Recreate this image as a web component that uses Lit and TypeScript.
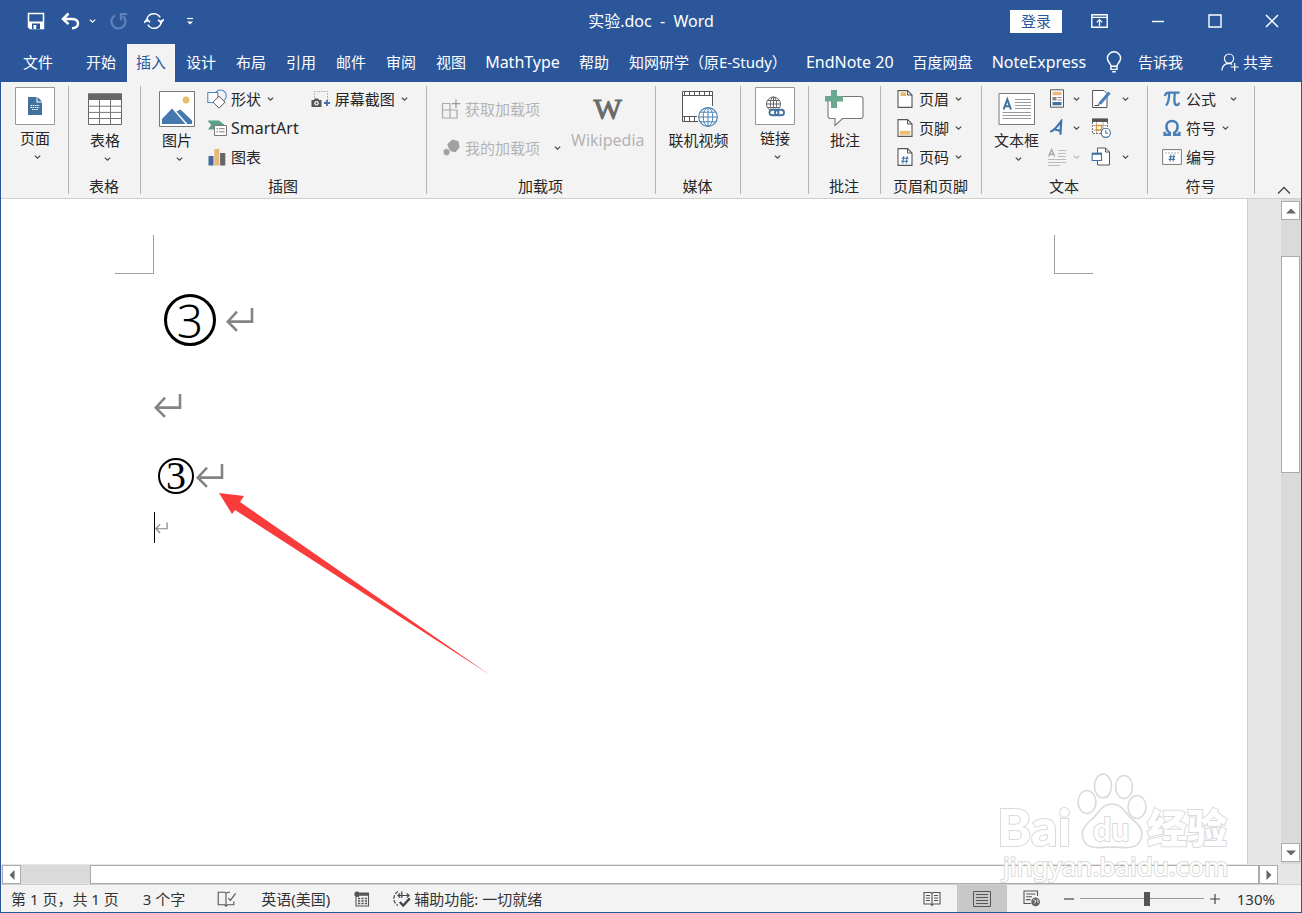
import { LitElement, html, css, svg, nothing } from "lit";
import type { TemplateResult } from "lit";
import { customElement, state } from "lit/decorators.js";
import { classMap } from "lit/directives/class-map.js";

const icon = (w: number, h: number, body: unknown) =>
  html`<svg class="ico" width=${w} height=${h} viewBox="0 0 ${w} ${h}" fill="none" aria-hidden="true">${body}</svg>`;

const chevron = (cls = "") =>
  html`<svg class="chev ${cls}" width="7" height="8" viewBox="0 0 7 8" fill="none" aria-hidden="true"><path d="M0.8 2.6 3.5 5.2 6.2 2.6" stroke="currentColor" stroke-width="1.2" /></svg>`;

const isLatin = (s: string) => /^[A-Za-z0-9 ]+$/.test(s);

const I = {
  save: icon(18, 18, svg`<path d="M1.5 1.5H16.5V16.5H3L1.5 15Z" stroke="#fff" stroke-width="1.5"/><path d="M2 9.5H16V16H2Z" fill="#fff"/><path d="M5 11.5H13V17H5Z" fill="#2b579a"/><path d="M6.5 13H9.2V17H6.5Z" fill="#fff"/>`),
  undo: icon(19, 18, svg`<path d="M7.5 1.5 2 7l5.5 5.2M2.5 7H10.5C15 7 17 9.2 17 11.6S15 16.3 11 16.3" stroke="#fff" stroke-width="2.5"/>`),
  redo: icon(18, 18, svg`<path d="M13 4.2A7 7 0 1 1 5 3.4" stroke="#6182b8" stroke-width="2.2"/><path d="M11 8.5V2H17" stroke="#6182b8" stroke-width="2.2"/>`),
  sync: icon(20, 18, svg`<path d="M2.8 10A7.2 7.2 0 0 1 16.2 5.4M17.2 8A7.2 7.2 0 0 1 3.8 12.6" stroke="#fff" stroke-width="1.6"/><path d="M0.2 10.8 2.9 7.4 6 10.2M19.8 7.2 17.1 10.6 14 7.8" stroke="#fff" stroke-width="1.6"/>`),
  more: icon(8, 9, svg`<path d="M1 1.5H7" stroke="#fff" stroke-width="1.2"/><path d="M1 4.4H7L4 7.6Z" fill="#fff"/>`),
  ribbonOpts: icon(17, 14, svg`<path d="M.8.8H16.2V13.2H.8ZM.8 3.4H16.2" stroke="#fff" stroke-width="1.4"/><path d="M8.5 12V6M5.8 8.4 8.5 5.6 11.2 8.4" stroke="#fff" stroke-width="1.3"/>`),
  min: icon(14, 14, svg`<path d="M1 7.5H13" stroke="#fff" stroke-width="1.4"/>`),
  max: icon(14, 14, svg`<path d="M1 1H13V13H1Z" stroke="#fff" stroke-width="1.4"/>`),
  close: icon(14, 14, svg`<path d="M1 1 13 13M13 1 1 13" stroke="#fff" stroke-width="1.5"/>`),
  bulb: icon(16, 22, svg`<path d="M5 15.2C5 12.6 1.4 11 1.4 7.2A6.6 6.4 0 0 1 14.6 7.2C14.6 11 11 12.6 11 15.2ZM5 15.2V18.4H11V15.2M6.2 20.8H9.8" stroke="#fff" stroke-width="1.4"/>`),
  share: icon(18, 18, svg`<circle cx="8" cy="5.6" r="4.6" stroke="#fff" stroke-width="1.2"/><path d="M.8 17.4C1.2 13.4 3.6 10.6 8 10.4 9.4 10.4 10.4 10.8 11.2 11.4M13.7 10V18M9.7 14H17.7" stroke="#fff" stroke-width="1.2"/>`),
  page: icon(40, 38, svg`<path d="M.5.5H39.5V37.5H.5Z" fill="#fff" stroke="#999"/><path d="M13 10H21.5V15.5H27V28H13Z" fill="#41719c"/><path d="M22.5 10 27 14.5H22.5Z" fill="#41719c"/><path d="M15.5 18.5H24.5M15.5 20.5H24.5M17 22.5H23" stroke="#fff" stroke-dasharray="1.5 .7"/>`),
  table: icon(36, 34, svg`<path d="M1.5 2H34.5V32.5H1.5Z" fill="#fff" stroke="#666"/><path d="M1 1.5H35V8H1Z" fill="#666"/><path d="M1.5 14.2H34.5M1.5 20.4H34.5M1.5 26.5H34.5M12.5 8V32M23.5 8V32" stroke="#777"/>`),
  picture: icon(36, 36, svg`<path d="M.5.5H35.5V35.5H.5Z" fill="#fff" stroke="#777"/><circle cx="27" cy="9" r="3.4" fill="#e3bf66"/><path d="M3 28 13 17.5 26.5 33H3Z" fill="#4678b0"/><path d="M17.5 20.5 21.5 18.5 33 29.5V33H28.5Z" fill="#4678b0"/>`),
  shapes: icon(20, 20, svg`<circle cx="13.5" cy="6.8" r="5.8" fill="#f3f3f3" stroke="#4d8abf" stroke-width="1.1"/><path d="M.8 3.5H10.8V13.5H.8Z" fill="#fff" stroke="#4d8abf" stroke-width="1.1"/><path d="M12 7.2 18 13.2 12 19.2 6 13.2Z" fill="#fff" stroke="#555" stroke-width="1"/>`),
  smartart: icon(20, 18, svg`<path d="M.5 1.5H12L17 5.5V7H7V10.5H1L4.2 6Z" fill="#5b9f88"/><path d="M7.5 6.5H19.5V16.5H7.5Z" fill="#fff" stroke="#777"/><path d="M9.5 9.7H11M12.2 9.7H17.5M9.5 12.8H11M12.2 12.8H17.5" stroke="#777"/>`),
  chart: icon(18, 18, svg`<path d="M.5 8H5.5V17.5H.5Z" fill="#44689f"/><path d="M6.3 1H11.3V17.5H6.3Z" fill="#e8b87b"/><path d="M12.1 5H17.3V17.5H12.1Z" fill="#666"/>`),
  screenshot: icon(20, 18, svg`<path d="M3.5 10V1.5H16.5V10" stroke="#999" stroke-dasharray="1.2 1.4"/><path d="M.5 10H3L4 8.5H7L8 10H10.5V17H.5Z" fill="#555"/><circle cx="5.5" cy="13.3" r="2.2" fill="#fff"/><circle cx="5.5" cy="13.3" r="1.1" fill="#555"/><path d="M16 10V16M13 13H19" stroke="#3f6fa8" stroke-width="1.8"/>`),
  addin: icon(20, 20, svg`<path d="M9.5 4.5H1.5V19H16V11H1.5M9 4.5V19" stroke="#aaa" stroke-width="1.2"/><path d="M15 .5V9M10.8 4.7H19.3" stroke="#999" stroke-width="1.2"/>`),
  myaddin: icon(18, 18, svg`<path d="M10.6.6 16.4 2.2 17.6 8.4 13.4 13.2 7.6 12 5.2 5Z" fill="#a0a0a0"/><path d="M4.4 9.3 8 11V15L4.6 17 1.2 15V11Z" fill="#a0a0a0" stroke="#f3f3f3" stroke-width=".8"/>`),
  video: icon(40, 37, svg`<g transform="translate(4 0)"><path d="M.5 1.5H30.5V31.5H.5Z" fill="#fff"/><path d="M.5 31.5V1.5H30.5V16M.5 5.5H30.5M.5 26.5H15M.5 31.5H16" stroke="#555"/><path d="M2 3.5H30" stroke="#555" stroke-width="4" stroke-dasharray="1 4"/><path d="M2 29H15" stroke="#555" stroke-width="5" stroke-dasharray="1 4"/><circle cx="26" cy="27" r="9.3" fill="#fff" stroke="#4a82b5" stroke-width="1.2"/><path d="M16.7 27H35.3M26 17.7V36.3M18.3 22.2H33.7M18.3 31.8H33.7" stroke="#4a82b5"/><ellipse cx="26" cy="27" rx="4.8" ry="9.3" stroke="#4a82b5"/></g>`),
  link: icon(40, 38, svg`<path d="M.5.5H39.5V37.5H.5Z" fill="#fff" stroke="#999"/><circle cx="18.5" cy="17" r="7" stroke="#666"/><ellipse cx="18.5" cy="17" rx="3.2" ry="7" stroke="#666"/><path d="M18.5 10V24M11.5 17H25.5M12.5 13.5H24.5M12.5 20.5H24.5" stroke="#666"/><path d="M16 21.5H29V29.5H16Z" fill="#fff"/><rect x="14.5" y="22.7" width="9" height="5.6" rx="2.8" stroke="#41719c" stroke-width="1.9"/><rect x="20" y="22.7" width="9" height="5.6" rx="2.8" stroke="#41719c" stroke-width="1.9"/>`),
  comment: icon(40, 38, svg`<path d="M5 6.5H35.5A2.5 2.5 0 0 1 38 9V26A2.5 2.5 0 0 1 35.5 28.5H17.5L10 35.5V28.5H5.5A2.5 2.5 0 0 1 3 26V9A2.5 2.5 0 0 1 5 6.5Z" fill="#fff" stroke="#777" stroke-width="1.1"/><path d="M6 0H12V6H18V11.5H12V18H6V11.5H0V6H6Z" fill="#69a78f"/>`),
  header: icon(16, 18, svg`<path d="M1 .6H10.5L15 5V17.4H1Z" fill="#fff" stroke="#555" stroke-width="1.1"/><path d="M10.5.6V5H15" stroke="#555"/><path d="M3.5 2.5H9V6H3.5Z" fill="#e6b866"/>`),
  footer: icon(16, 18, svg`<path d="M1 .6H10.5L15 5V17.4H1Z" fill="#fff" stroke="#555" stroke-width="1.1"/><path d="M10.5.6V5H15" stroke="#555"/><path d="M2.8 11.8H13.2V15.8H2.8Z" fill="#e6c070"/>`),
  number: icon(16, 18, svg`<path d="M1 .6H10.5L15 5V17.4H1Z" fill="#fff" stroke="#555" stroke-width="1.1"/><path d="M10.5.6V5H15" stroke="#555"/><path d="M6.8 8 5.8 15.5M10.2 8 9.2 15.5M4.4 10.3H11.6M4 13.2H11.2" stroke="#3f6fa8" stroke-width="1.1"/>`),
  textbox: icon(38, 32, svg`<path d="M1 .5H36.5V31.5H1Z" fill="#fff" stroke="#777"/><path d="M5.6 16.5 9.3 6.4 13 16.5M6.8 13.2H11.8" stroke="#41719c" stroke-width="2"/><path d="M17 6.5H33M17 9.5H33M17 12.5H33M17 15.5H33M4.5 19.5H33M4.5 22.5H33M4.5 25.5H33" stroke="#999"/>`),
  parts: icon(18, 20, svg`<path d="M2.5.8H15.5V18.2H2.5Z" fill="#fff" stroke="#555"/><path d="M4.5 2.8H13.5V6.2H4.5Z" fill="#e8b87b"/><path d="M4.5 8H8.5V11.5H4.5Z" fill="#888"/><path d="M9.5 8.5H13.5M9.5 11H13.5" stroke="#888"/><path d="M4.5 13H13.5V16.3H4.5Z" fill="#41719c"/>`),
  sign: icon(20, 20, svg`<path d="M1.6 1.5H13L16 4.5V18.5H1.6Z" fill="#fff" stroke="#555"/><path d="M18.5 3.5 9 14.5" stroke="#4a82b5" stroke-width="3.2"/><path d="M8.8 12.4 11 14.5 6.2 16.8Z" fill="#4a82b5"/><path d="M3.5 16.5H8" stroke="#555"/>`),
  wordart: icon(18, 18, svg`<path d="M2.2 12.8C6.5 11.5 9.5 7 13.2 2.2L12.4 15.6M5.8 10.2 13 12" stroke="#3f73b0" stroke-width="2.2"/>`),
  date: icon(20, 22, svg`<path d="M1.5 2H16.5V16.5H1.5Z" fill="#fff" stroke="#777" stroke-dasharray="2 1"/><path d="M1 1.5H17V5H1Z" fill="#555"/><path d="M5.5 5V16M12 5V16M1.5 8.5H16M1.5 13H12" stroke="#999" stroke-width=".8"/><path d="M5.5 8.5H10.5V13H5.5Z" stroke="#e0962f" stroke-width="1.4"/><circle cx="14.8" cy="15.8" r="4.6" fill="#fff" stroke="#41719c" stroke-width="1.1"/><path d="M14.8 13V16.2H17.2" stroke="#41719c"/>`),
  dropcap: icon(20, 18, svg`<path d="M1.6 8.5 4.6 1.5 7.6 8.5M2.6 6.2H6.6" stroke="#aaa" stroke-width="1.4"/><path d="M11 2.5H19M11 5.5H19M11 8.5H19M1 11.5H19M1 14.5H19M1 17.5H13" stroke="#bbb"/>`),
  object: icon(20, 20, svg`<path d="M6.5 1H14.5L18.5 5V18H6.5Z" fill="#fff" stroke="#555"/><path d="M14.5 1V5H18.5" stroke="#555"/><path d="M1.2 6.3H10.5V13.5H1.2Z" fill="#fff" stroke="#41719c" stroke-width="1.1"/><path d="M1 5.8H11V7.8H1Z" fill="#41719c"/>`),
  pi: icon(18, 18, svg`<path d="M1.8 6C2.4 3.4 3.4 2.6 5.6 2.6H16.6M6.2 3C6.2 8.5 5.8 12.5 3 15.6M11.8 3C11.2 9 10.8 15.2 13.8 15.2 15.2 15.2 15.8 14 16 12.6" stroke="#4a7fb5" stroke-width="2.3"/>`),
  omega: icon(18, 18, svg`<path d="M1.6 12.8V15.8H6.8V13.8C4.2 12.3 3.4 10 3.4 7.6 3.4 4.2 5.6 2 9 2S14.6 4.2 14.6 7.6C14.6 10 13.8 12.3 11.2 13.8V15.8H16.4V12.8" stroke="#4a7fb5" stroke-width="2.5"/>`),
  num: icon(20, 16, svg`<path d="M.6.6H19.4V15.4H.6Z" fill="#fff" stroke="#777"/><path d="M3 4H17" stroke="#aaa" stroke-dasharray="2 1"/><path d="M9 5.5 8 12.5M12 5.5 11 12.5M6.8 7.8H13.2M6.6 10.4H13" stroke="#41719c" stroke-width="1.1"/>`),
  book: icon(20, 16, svg`<path d="M9 2.4 7.6 1.2H1.2V13.8H7.6L9 15.2 10.5 13.8H16.8V10.5M9 2.4V15M9 2.4 10.5 1.2H13M11.4 7.2 13.4 9.4 18.6 2.4" stroke="#555" stroke-width="1.1"/>`),
  macro: icon(16, 16, svg`<path d="M2 6V15H14.5V2" stroke="#555" stroke-width="1.1"/><path d="M6 1.5H15V4.8H6Z" fill="#555"/><circle cx="3.2" cy="3.2" r="2.8" fill="#555"/><path d="M4 7.5H13M4 10H13M4 12.5H13" stroke="#555" stroke-width="1.3" stroke-dasharray="2.2 1.2"/>`),
  access: icon(20, 18, svg`<path d="M6 1.5A8 8 0 0 0 6 15.5" stroke="#444" stroke-width="1.2" stroke-dasharray="3.6 1.4"/><path d="M9.8 1.5V8M6 5.5H17M8.2 3.4 6 5.5 8.2 7.6M14.8 3.4 17 5.5 14.8 7.6" stroke="#444" stroke-width="1.2"/><path d="M7.8 12 11.2 15.6 17.8 8.4" stroke="#444" stroke-width="2.3"/>`),
  read: icon(18, 16, svg`<path d="M9 2.5 7.8 1.5H1V13H7.8L9 14.5 10.2 13H17V1.5H10.2ZM9 2.5V14M3 4.5H7M3 7H7M3 9.5H7M11 4.5H15M11 7H15M11 9.5H15" stroke="#555" stroke-width="1.1"/>`),
  print: icon(18, 16, svg`<path d="M.5.5H17.5V15.5H.5Z" stroke="#555"/><path d="M3 3.5H15M3 6.5H15M3 9.5H15M3 12.5H15" stroke="#555"/>`),
  web: icon(18, 17, svg`<path d="M8 13.5H1V1H14.5V6M3.2 4H12.4M3.2 6.8H9M3.2 9.6H7.6" stroke="#555" stroke-width="1.1"/><circle cx="12.6" cy="11.8" r="4.4" fill="#666"/><path d="M10.4 9.5 12.8 10.8 11.6 13.4M14.6 9.2 15 12.6" stroke="#eee"/>`),
};

const enter = (w: number, h: number) =>
  html`<svg width=${w} height=${h} viewBox="0 0 28 24" fill="none" aria-hidden="true"><path d="M26 0V13.6H2.5M11 3.6 1.8 13.6 11 22.8" stroke="#848484" stroke-width="2.6" /></svg>`;

const tri = (d: string) =>
  html`<svg width="10" height="10" viewBox="0 0 10 10" aria-hidden="true"><path d=${d} fill="#666" /></svg>`;

@customElement("word-ribbon")
export class WordRibbon extends LitElement {
  static styles = css`
    :host { display: block; background: #f3f3f3; border-bottom: 1px solid #cfcfcf; }
    .ribbon { display: flex; height: 116px; }
    .group { display: flex; flex-direction: column; position: relative; box-sizing: border-box; flex: none; }
    .group::after { content: ""; position: absolute; right: 0; top: 4px; bottom: 4px; width: 1px; background: #b4b4b4; }
    .body { flex: 1; display: flex; align-items: flex-start; }
    .center .body { justify-content: center; }
    .label { height: 24px; line-height: 24px; text-align: center; color: #262626; padding-right: 2px; }
    .w68 { width: 68px; }
    .w72 { width: 72px; }
    .w85 { width: 85px; }
    .w101 { width: 101px; }
    .w107 { width: 107px; }
    .w166 { width: 166px; }
    .w229 { width: 229px; }
    .w286 { width: 286px; }
    .p12 { padding-left: 12px; }
    .p14 { padding-left: 14px; }
    .p18 { padding-left: 18px; }
    button { font: inherit; color: #262626; background: none; border: 0; padding: 0; margin: 0; white-space: nowrap; }
    button:disabled { color: #b3b3b3; }
    .big { display: flex; flex-direction: column; align-items: center; padding-top: 8px; }
    .big .slot { height: 37px; display: flex; align-items: center; }
    .big .text { line-height: 20px; margin-top: 3px; }
    .big .chev { margin-top: 5px; margin-left: 4px; }
    .big.boxed { padding-top: 5px; }
    .big.boxed .slot { height: 38px; }
    .col { display: flex; flex-direction: column; padding-top: 2px; }
    .row { display: flex; align-items: center; height: 29px; }
    .slot20 { width: 20px; display: flex; justify-content: center; }
    .row .text { margin-left: 4px; }
    .row .chev { margin-left: 6px; }
    .text.latin { font-size: 16px; }
    .ico, .chev { display: block; flex: none; }
    .chev { color: #444; }
    .chev.pale { color: #bbb; }
    .row .chev.far { margin-left: 14px; }
    .addins { padding-top: 7px; }
    .addins .row { height: 39px; }
    .shots { margin-left: 12px; }
    .wiki { margin-left: 10px; }
    .w { font-family: "Liberation Serif", serif; font-size: 30px; line-height: 37px; color: #6a6a6a; -webkit-text-stroke: 1px #6a6a6a; }
    .icons { margin-left: 8px; }
    .icons + .icons { margin-left: 11px; }
    .icons + .icons .chev { margin-left: 11px; }
    .tail { flex: 1; display: flex; align-items: flex-end; justify-content: flex-end; padding: 0 10px 3px 0; }
  `;

  caption(text: string) {
    return html`<span class=${classMap({ text: true, latin: isLatin(text) })}>${text}</span>`;
  }

  big(text: string, ico: unknown, drop = false, boxed = false, off = false) {
    return html`<button class=${classMap({ big: true, boxed })} ?disabled=${off}>
      <span class="slot">${ico}</span>${this.caption(text)}${drop ? chevron() : nothing}
    </button>`;
  }

  row(text: string, ico: unknown, drop: boolean | string = false, off = false) {
    return html`<button class="row" aria-label=${text} ?disabled=${off}>
      <span class="slot20">${ico}</span>${this.caption(text)}${drop === false ? nothing : chevron(drop === true ? "" : drop)}
    </button>`;
  }

  tool(name: string, ico: unknown, drop = true, off = false) {
    return html`<button class="row" aria-label=${name} ?disabled=${off}>
      <span class="slot20">${ico}</span>${drop ? chevron(off ? "pale" : "") : nothing}
    </button>`;
  }

  group(cls: string, label: string, body: TemplateResult) {
    return html`<section class="group ${cls}"><div class="body">${body}</div><div class="label">${label}</div></section>`;
  }

  render() {
    return html`<div class="ribbon">
      ${this.group("w68 center", "", this.big("页面", I.page, true, true))}
      ${this.group("w72 center", "表格", this.big("表格", I.table, true))}
      ${this.group("w286", "插图", html`
        <div class="p18">${this.big("图片", I.picture, true)}</div>
        <div class="col p12">
          ${this.row("形状", I.shapes, true)}${this.row("SmartArt", I.smartart)}${this.row("图表", I.chart)}
        </div>
        <div class="col shots">${this.row("屏幕截图", I.screenshot, true)}</div>`)}
      ${this.group("w229", "加载项", html`
        <div class="col addins p14">
          ${this.row("获取加载项", I.addin, false, true)}${this.row("我的加载项", I.myaddin, "far", true)}
        </div>
        <div class="wiki">${this.big("Wikipedia", html`<span class="w">W</span>`, false, false, true)}</div>`)}
      ${this.group("w85 center", "媒体", this.big("联机视频", I.video))}
      ${this.group("w68 center", "", this.big("链接", I.link, true, true))}
      ${this.group("w72 center", "批注", this.big("批注", I.comment))}
      ${this.group("w101", "页眉和页脚", html`<div class="col p14">
        ${this.row("页眉", I.header, true)}${this.row("页脚", I.footer, true)}${this.row("页码", I.number, true)}</div>`)}
      ${this.group("w166", "文本", html`
        <div class="p12">${this.big("文本框", I.textbox, true)}</div>
        <div class="col icons">
          ${this.tool("文档部件", I.parts)}${this.tool("艺术字", I.wordart)}${this.tool("首字下沉", I.dropcap, true, true)}
        </div>
        <div class="col icons">
          ${this.tool("签名行", I.sign)}${this.tool("日期和时间", I.date, false)}${this.tool("对象", I.object)}
        </div>`)}
      ${this.group("w107", "符号", html`<div class="col p14">
        ${this.row("公式", I.pi, "far")}${this.row("符号", I.omega, true)}${this.row("编号", I.num)}</div>`)}
      <div class="tail"><button aria-label="折叠功能区">${icon(14, 9, svg`<path d="M1 7.5 7 1.5 13 7.5" stroke="#444" stroke-width="1.3"/>`)}</button></div>
    </div>`;
  }
}

@customElement("word-page")
export class WordPage extends LitElement {
  static styles = css`
    :host { display: block; position: relative; background: #fff; border-right: 1px solid #cfcfcf; overflow: hidden; }
    .marks { display: flex; justify-content: space-between; box-sizing: border-box; width: 978px; margin: 36px 0 0 114px; }
    .mark { width: 38px; height: 38px; border-bottom: 1px solid #a0a0a0; }
    .mark.l { border-right: 1px solid #a0a0a0; }
    .mark.r { border-left: 1px solid #a0a0a0; }
    .text { padding-left: 153px; color: #000; }
    p { margin: 0; display: flex; align-items: center; }
    .first { height: 92px; padding-left: 10px; gap: 10px; }
    .blank { height: 80px; }
    .third { height: 60px; padding-left: 4px; gap: 2px; }
    .last { height: 43px; }
    .ring { box-sizing: border-box; display: flex; align-items: center; justify-content: center; border-radius: 50%; border: 3px solid #000; }
    .ring.lg { width: 52px; height: 52px; font: 300 46px/46px "Noto Sans", "Open Sans", sans-serif; }
    .ring.sm { width: 36px; height: 36px; border-width: 2px; font: 40px/32px "Liberation Serif", serif; }
    .caret { width: 1px; height: 31px; background: #000; }
    .arrow { position: absolute; left: 217px; top: 291px; }
  `;
  render() {
    return html`
      <div class="marks"><span class="mark l"></span><span class="mark r"></span></div>
      <div class="text">
        <p class="first"><span class="ring lg">3</span>${enter(28, 24)}</p>
        <p class="blank">${enter(28, 24)}</p>
        <p class="third"><span class="ring sm">3</span>${enter(28, 24)}</p>
        <p class="last"><span class="caret"></span>${enter(13, 12)}</p>
      </div>
      <svg class="arrow" width="274" height="186" viewBox="0 0 274 186" aria-hidden="true">
        <path d="M1 3 26 6 22 12 272 185 17 20 14 24Z" fill="#f93b3b" />
      </svg>`;
  }
}

@customElement("app-root")
export class AppRoot extends LitElement {
  static styles = css`
    :host { display: block; font: 15px/20px "Noto Sans", "Noto Sans CJK SC", sans-serif; color: #262626; }
    * { box-sizing: border-box; }
    .window { display: flex; flex-direction: column; height: 100vh; border: 1px solid #2b579a; border-top: 0; position: relative; background: #e6e6e6; overflow: hidden; }
    button { font: inherit; color: inherit; background: none; border: 0; padding: 0; margin: 0; white-space: nowrap; }
    .ico, .chev { display: block; flex: none; }
    .title { display: grid; grid-template-columns: 1fr auto 1fr; align-items: center; height: 42px; background: #2b579a; color: #fff; }
    .quick { display: flex; align-items: center; padding-left: 26px; }
    .quick .chev { margin-left: 9px; }
    .gap { margin-left: 16px; }
    .gap.s { margin-left: 14px; }
    .gap.l { margin-left: 22px; }
    .name { white-space: pre; font-size: 16px; }
    .win { display: flex; align-items: center; justify-content: flex-end; padding-right: 22px; gap: 43px; }
    .login { background: #fff; color: #2b579a; width: 52px; height: 23px; line-height: 23px; margin-right: -14px; }
    .tabs { display: flex; align-items: flex-end; height: 40px; background: #2b579a; color: #fff; gap: 2px; }
    .tab { height: 38px; padding: 0 9px 2px; display: flex; align-items: center; }
    .tab.latin { font-size: 16px; padding: 0 8px 2px; }
    .tab.file { width: 74px; justify-content: center; }
    .tab.active { background: #f3f3f3; color: #2b579a; }
    .tab.tell { gap: 16px; padding-left: 10px; }
    .tab.share { margin-left: auto; padding-right: 28px; gap: 4px; }
    .work { flex: 1; min-height: 0; display: flex; }
    word-page { flex: 1; }
    .gutter { width: 33px; }
    .vbar { width: 20px; padding: 2px 1px 2px 0; background: #dadada; display: flex; flex-direction: column; }
    .step { width: 19px; height: 19px; display: flex; align-items: center; justify-content: center; background: #fff; border: 1px solid #ababab; flex: none; }
    .vtrack { flex: 1; padding-top: 36px; }
    .vthumb { height: 37%; background: #fff; border: 1px solid #ababab; width: 19px; }
    .hbar { height: 21px; padding: 1px 23px 1px 1px; display: flex; border-bottom: 1px solid #cfcfcf; }
    .htrack { flex: 1; background: #dadada; padding-left: 69px; }
    .hthumb { height: 19px; background: #fff; border: 1px solid #ababab; }
    .status { height: 27px; background: #f3f3f3; display: flex; align-items: center; padding: 0 26px 0 10px; color: #333; }
    .s24 { margin-left: 24px; }
    .s32 { margin-left: 32px; }
    .acc { display: flex; align-items: center; gap: 2px; margin-left: 22px; }
    .views { display: flex; align-items: center; margin-left: auto; height: 100%; }
    .view { width: 50px; height: 100%; display: flex; align-items: center; justify-content: center; }
    .view.on { background: #c8c8c8; }
    .zoom { display: flex; align-items: center; gap: 4px; margin-left: 5px; }
    .pct { margin-left: 15px; }
    input { appearance: none; width: 124px; height: 16px; margin: 0; background: linear-gradient(#999, #999) center / 100% 1px no-repeat; }
    input::-webkit-slider-thumb { appearance: none; width: 6px; height: 14px; background: #555; border: 0; border-radius: 0; }
    .brand { position: absolute; right: 51px; bottom: 22px; }
    .brand text { fill: #fff; stroke: #dadada; stroke-width: 2px; paint-order: stroke; }
    .wm1 { font: 900 52px Lato, sans-serif; }
    .wm2 { font: bold 32px Lato, sans-serif; }
    .wm3 { font: 900 40px "Noto Sans CJK SC", sans-serif; }
    .wm4 { font: 26px "Noto Sans", sans-serif; }
  `;

  @state() private tab = "插入";
  private tabs = ["开始", "插入", "设计", "布局", "引用", "邮件", "审阅", "视图", "MathType", "帮助", "知网研学（原E-Study）", "EndNote 20", "百度网盘", "NoteExpress"];

  render() {
    return html`<div class="window">
      <header class="title">
        <div class="quick">
          <button aria-label="保存">${I.save}</button>
          <button class="gap" aria-label="撤消">${I.undo}</button>${chevron()}
          <button class="gap s" aria-label="重复">${I.redo}</button>
          <button class="gap" aria-label="同步">${I.sync}</button>
          <button class="gap l" aria-label="自定义快速访问工具栏">${I.more}</button>
        </div>
        <div class="name">实验.doc  -  Word</div>
        <div class="win">
          <button class="login">登录</button>
          <button aria-label="功能区显示选项">${I.ribbonOpts}</button>
          <button aria-label="最小化">${I.min}</button>
          <button aria-label="最大化">${I.max}</button>
          <button aria-label="关闭">${I.close}</button>
        </div>
      </header>
      <nav class="tabs">
        <button class="tab file">文件</button>
        ${this.tabs.map((t) => html`<button class=${classMap({ tab: true, latin: isLatin(t), active: t === this.tab })} @click=${() => (this.tab = t)}>${t}</button>`)}
        <button class="tab tell">${I.bulb}告诉我</button>
        <button class="tab share">${I.share}共享</button>
      </nav>
      <word-ribbon></word-ribbon>
      <div class="work">
        <word-page></word-page>
        <div class="gutter"></div>
        <div class="vbar">
          <button class="step" aria-label="向上滚动">${tri("M0 7.5H10L5 2.5Z")}</button>
          <div class="vtrack"><div class="vthumb"></div></div>
          <button class="step" aria-label="向下滚动">${tri("M0 2.5H10L5 7.5Z")}</button>
        </div>
      </div>
      <div class="hbar">
        <button class="step" aria-label="向左滚动">${tri("M7.5 0V10L2.5 5Z")}</button>
        <div class="htrack"><div class="hthumb"></div></div>
        <button class="step" aria-label="向右滚动">${tri("M2.5 0V10L7.5 5Z")}</button>
      </div>
      <footer class="status">
        <span>第 1 页，共 1 页</span>
        <span class="s24">3 个字</span>
        <button class="s32" aria-label="校对">${I.book}</button>
        <button class="s24">英语(美国)</button>
        <button class="s24" aria-label="宏录制">${I.macro}</button>
        <button class="acc">${I.access}辅助功能: 一切就绪</button>
        <div class="views">
          <button class="view" aria-label="阅读视图">${I.read}</button>
          <button class="view on" aria-label="页面视图">${I.print}</button>
          <button class="view" aria-label="Web 版式视图">${I.web}</button>
        </div>
        <div class="zoom">
          <button aria-label="缩小">${icon(14, 14, svg`<path d="M2 7H12" stroke="#444" stroke-width="1.2"/>`)}</button>
          <input type="range" min="0" max="100" value="54" aria-label="缩放" />
          <button aria-label="放大">${icon(14, 14, svg`<path d="M2 7H12M7 2V12" stroke="#444" stroke-width="1.2"/>`)}</button>
        </div>
        <button class="pct">130%</button>
      </footer>
      <svg class="brand" width="260" height="120" viewBox="-10 0 260 120" aria-hidden="true">
        <text class="wm1" x="-3" y="76">Bai</text>
        <g fill="#fff" stroke="#dadada" stroke-width="1.6">
          <ellipse cx="87" cy="32" rx="9" ry="11.5" /><ellipse cx="103" cy="16" rx="8.5" ry="12" />
          <ellipse cx="124" cy="17" rx="8.5" ry="11.5" /><ellipse cx="137" cy="37" rx="9" ry="11.5" />
          <path d="M112 34C123 34 125 44 133 50 142 57 144 63 140 71 136 79 127 78 112 77 97 78 88 79 84 71 80 63 83 57 91 50 99 44 101 34 112 34Z" />
        </g>
        <text class="wm2" x="93" y="71">du</text>
        <text class="wm3" x="147" y="73">经验</text>
        <text class="wm4" x="3" y="106">jingyan.baidu.com</text>
      </svg>
    </div>`;
  }
}
